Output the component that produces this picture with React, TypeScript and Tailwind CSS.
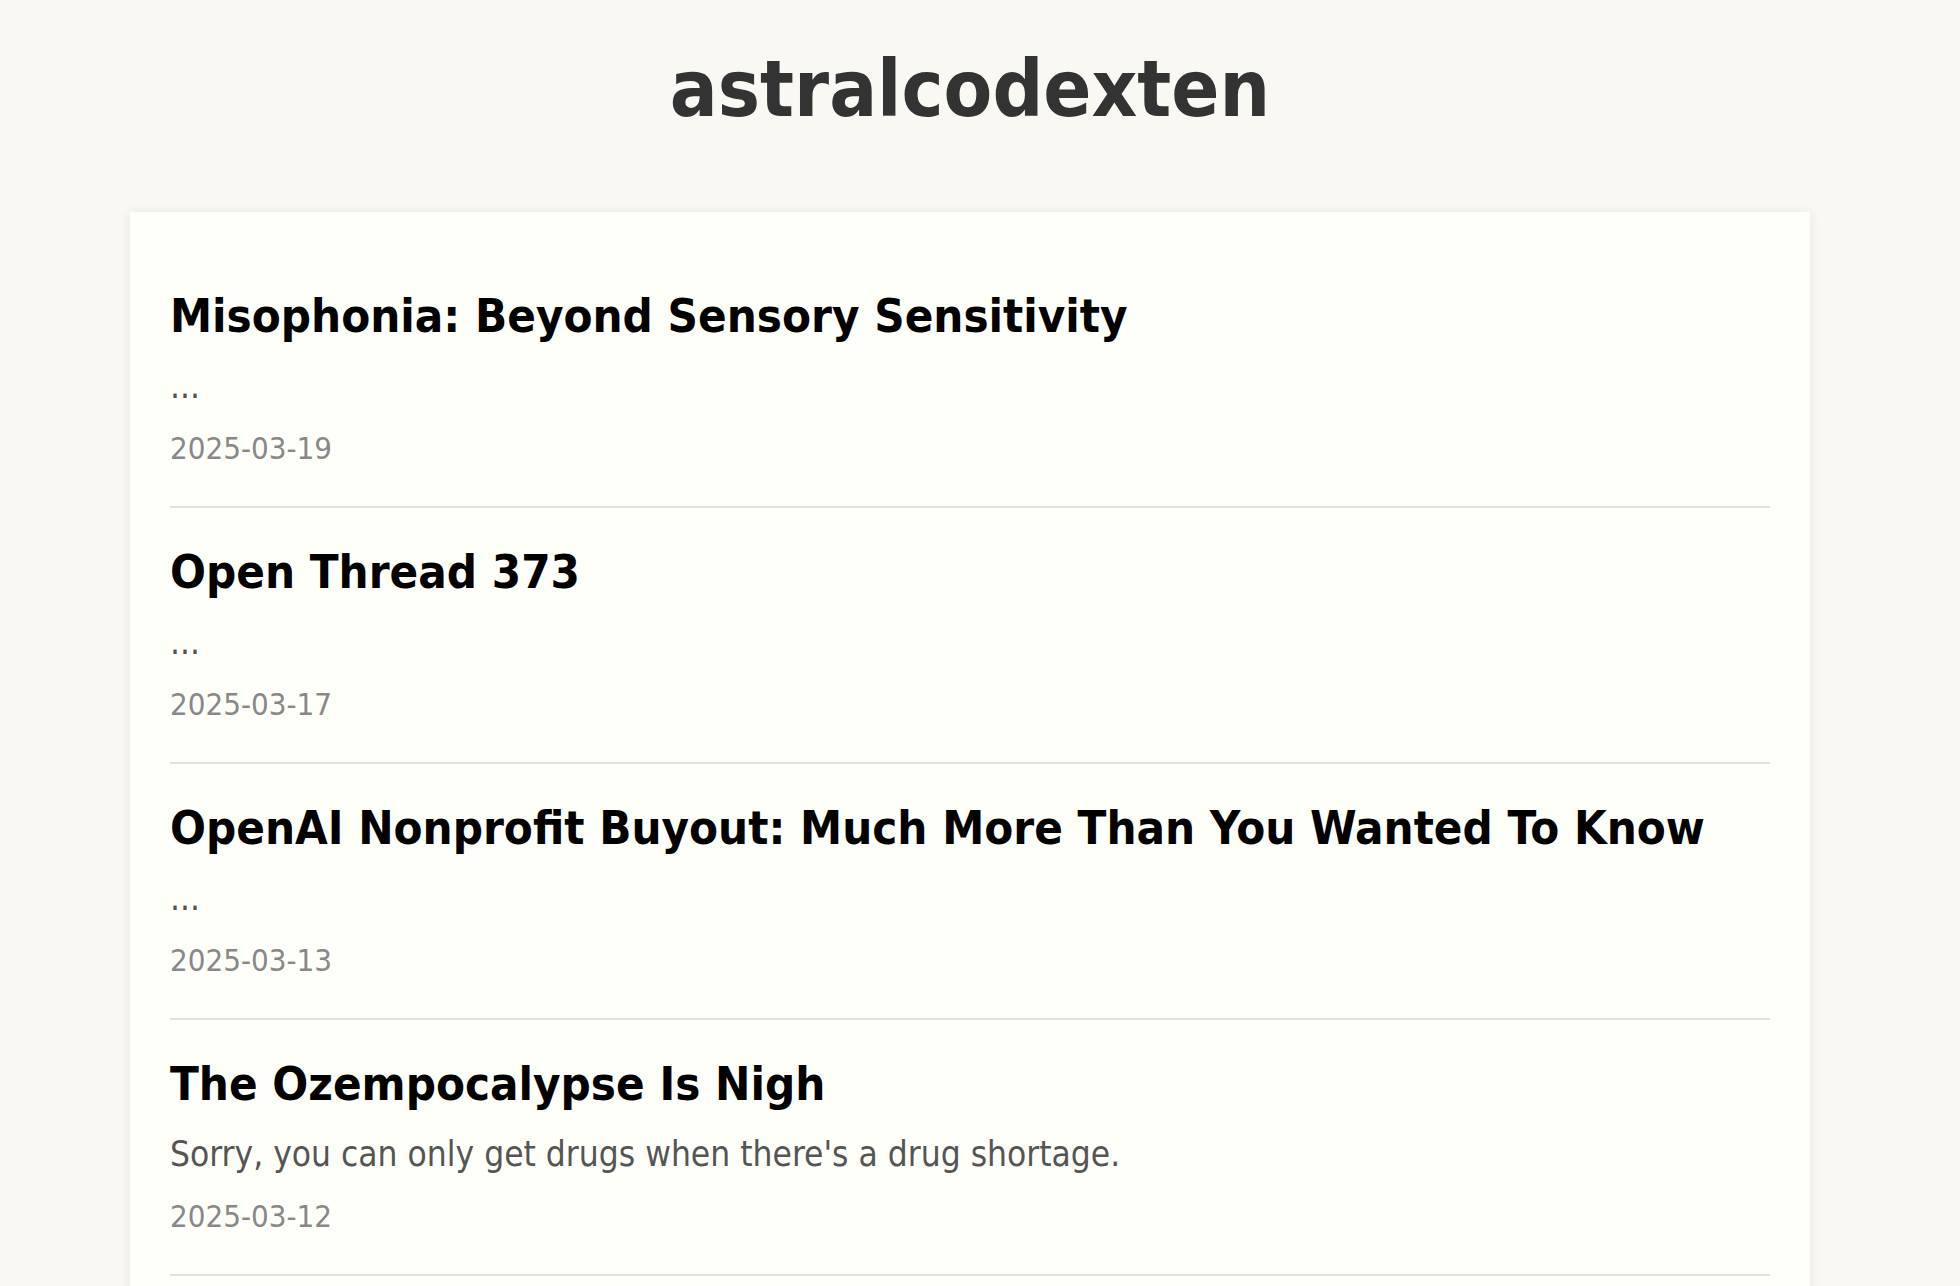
const posts = [
  { title: 'Misophonia: Beyond Sensory Sensitivity', excerpt: '...', date: '2025-03-19' },
  { title: 'Open Thread 373', excerpt: '...', date: '2025-03-17' },
  { title: 'OpenAI Nonprofit Buyout: Much More Than You Wanted To Know', excerpt: '...', date: '2025-03-13' },
  { title: 'The Ozempocalypse Is Nigh', excerpt: "Sorry, you can only get drugs when there's a drug shortage.", date: '2025-03-12' },
];

export default function App() {
  return (
    <div className="min-h-screen bg-[#faf8f3] pr-5 font-['DejaVu_Sans_Condensed','DejaVu_Sans',Tahoma,sans-serif]">
      <h1 className="pt-[41px] text-center text-[79px] font-bold leading-[96px] text-[#333]">astralcodexten</h1>

      <main className="mx-auto mt-[75px] w-[1680px] bg-[#fffffa] px-10 pt-10 pb-10 shadow-[0_0_12px_rgba(0,0,0,0.07)]">
        {posts.map((post) => (
          <article key={post.date} className="border-b-2 border-[#e0e0dd] pt-9 pb-[38px]">
            <h2 className="text-[47px] font-bold leading-[56px] text-black">{post.title}</h2>
            <p className="mt-5 text-[35px] leading-[44px] text-[#555]">{post.excerpt}</p>
            <p className="mt-5 text-[31px] leading-[40px] text-[#888]">{post.date}</p>
          </article>
        ))}
      </main>
    </div>
  );
}
